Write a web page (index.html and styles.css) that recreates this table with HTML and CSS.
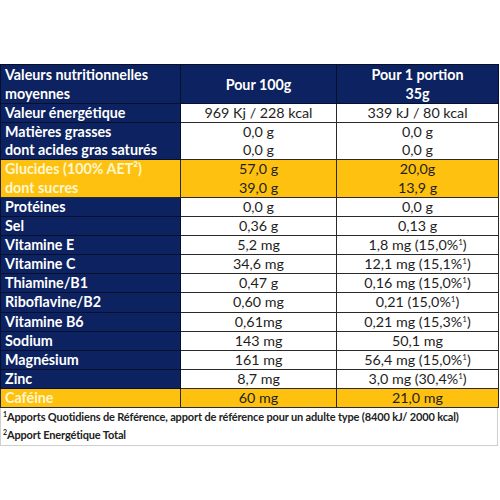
FILE: index.html
```html
<!DOCTYPE html>
<html lang="fr">
<head>
<meta charset="utf-8">
<link rel="stylesheet" href="styles.css">
</head>
<body>
<div class="wrap">
<table class="nt">
<colgroup><col class="c1"><col class="c2"><col class="c3"></colgroup>
<tr class="head"><th class="lbl">Valeurs nutritionnelles<br>moyennes</th><th>Pour 100g</th><th>Pour 1 portion<br>35g</th></tr>
<tr><th class="lbl">Valeur énergétique</th><td>969 Kj / 228 kcal</td><td>339 kJ / 80 kcal</td></tr>
<tr class="top"><th class="lbl">Matières grasses</th><td>0,0 g</td><td>0,0 g</td></tr>
<tr class="sub"><th class="lbl">dont acides gras saturés</th><td>0,0 g</td><td>0,0 g</td></tr>
<tr class="top hl"><th class="lbl">Glucides (100% AET²)</th><td>57,0 g</td><td>20,0g</td></tr>
<tr class="sub hl"><th class="lbl">dont sucres</th><td>39,0 g</td><td>13,9 g</td></tr>
<tr><th class="lbl">Protéines</th><td>0,0 g</td><td>0,0 g</td></tr>
<tr><th class="lbl">Sel</th><td>0,36 g</td><td>0,13 g</td></tr>
<tr><th class="lbl">Vitamine E</th><td>5,2 mg</td><td>1,8 mg (15,0%<sup>1</sup>)</td></tr>
<tr><th class="lbl">Vitamine C</th><td>34,6 mg</td><td>12,1 mg (15,1%<sup>1</sup>)</td></tr>
<tr><th class="lbl">Thiamine/B1</th><td>0,47 g</td><td>0,16 mg (15,0%<sup>1</sup>)</td></tr>
<tr><th class="lbl">Riboflavine/B2</th><td>0,60 mg</td><td>0,21 (15,0%<sup>1</sup>)</td></tr>
<tr><th class="lbl">Vitamine B6</th><td>0,61mg</td><td>0,21 mg (15,3%<sup>1</sup>)</td></tr>
<tr><th class="lbl">Sodium</th><td>143 mg</td><td>50,1 mg</td></tr>
<tr><th class="lbl">Magnésium</th><td>161 mg</td><td>56,4 mg (15,0%<sup>1</sup>)</td></tr>
<tr><th class="lbl">Zinc</th><td>8,7 mg</td><td>3,0 mg (30,4%<sup>1</sup>)</td></tr>
<tr class="hl"><th class="lbl">Caféine</th><td>60 mg</td><td>21,0 mg</td></tr>
</table>
<div class="notes">
<p><sup>1</sup>Apports Quotidiens de Référence, apport de référence pour un adulte type (8400 kJ/ 2000 kcal)</p>
<p><sup>2</sup>Apport Energétique Total</p>
</div>
</div>
</body>
</html>
```
FILE: styles.css
```css
html, body { margin: 0; padding: 0; background: #fff; }
body { font-family: Lato, "Open Sans", sans-serif; color: #1e1e1e; }
.wrap { padding-top: 64px; width: 498px; }
.nt { border-collapse: collapse; width: 498px; table-layout: fixed; }
.c1 { width: 180px; }
.c2 { width: 156px; }
.c3 { width: 162px; }
.nt th, .nt td { height: 18.15px; padding: 0 4px; font-size: 14.3px; line-height: 18px; border: 1px solid #2a2a2a; white-space: nowrap; }
.nt td { text-align: center; background: #fff; font-weight: 400; }
.nt .lbl { background: #0d2260; color: #fff; text-align: left; font-weight: 700; border-color: #06102e; }
.head th { background: #0d2260; color: #fff; font-weight: 700; text-align: center; height: 38px; line-height: 19px; border-color: #06102e; }
.nt .head .lbl { text-align: left; }
.top th, .top td { border-bottom: none; }
.sub th, .sub td { border-top: none; }
.hl td { background: #fec10f; }
.nt .hl .lbl { background: #fec10f; color: #fff6cf; font-weight: 700; border-color: #2a2a2a; }
sup { font-size: 8px; line-height: 0; vertical-align: 5px; }
.notes { border: 1px solid #cfcfcf; border-top: none; padding: 0 2px 1px; }
.notes p { margin: 0; font-size: 11px; letter-spacing: -0.15px; line-height: 18px; font-weight: 700; color: #222; white-space: nowrap; }
.notes sup { font-size: 7px; vertical-align: 4px; }
```
